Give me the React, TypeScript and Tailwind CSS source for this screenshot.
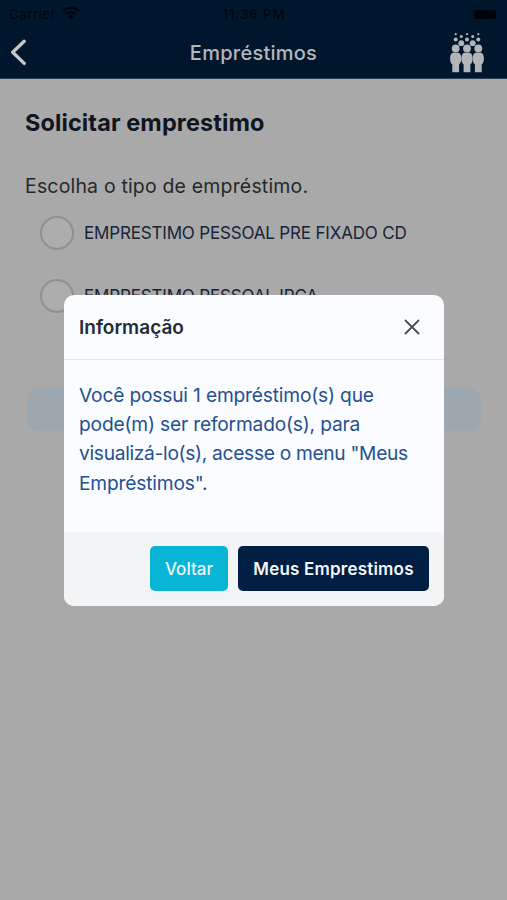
function BackIcon() {
  return (
    <svg className="block h-7 w-5" viewBox="0 0 20 28" fill="none" stroke="#c4c7c9" strokeWidth="3.4" strokeLinecap="round" strokeLinejoin="round">
      <path d="M16.200 2.300 4.700 13.200l11.500 11.200" />
    </svg>
  );
}

function WifiIcon() {
  return (
    <svg className="block h-[14px] w-[18px]" viewBox="0 0 18 14" fill="none" stroke="#00060d" strokeWidth="2.3">
      <path d="M1 4.1a11.8 11.8 0 0 1 16 0" />
      <path d="M3.9 7.2a7.6 7.6 0 0 1 10.2 0" />
      <path d="M9 12.6 5.9 9.5a4.6 4.6 0 0 1 6.2 0z" fill="#00060d" stroke="none" />
    </svg>
  );
}

function PeopleLogo() {
  return (
    <svg className="block h-10 w-9" viewBox="0 0 36 40" fill="#b4b5b7">
      {[6.7, 18, 29.3].map((x) => (
        <g key={x}>
          <circle cx={x} cy="15.500" r="3.900" />
          <path d={`M${x - 3} 19.800h6c2 1 2.600 3.200 2.600 6 0 2.900-.8 4.800-2.200 5.700V39.300h-6.800V31.500c-1.400-.9-2.200-2.800-2.200-5.700 0-2.800.6-5 2.600-6z`} />
          <circle cx={x} cy="6.600" r="2" />
          <circle cx={x} cy="1.200" r="1.100" />
        </g>
      ))}
      <circle cx="12.300" cy="10.200" r="2.900" />
      <circle cx="23.700" cy="10.200" r="2.900" />
      <circle cx="12.300" cy="3.600" r="1.500" />
      <circle cx="23.700" cy="3.600" r="1.500" />
    </svg>
  );
}

function Option({ label }: { label: string }) {
  return (
    <label className="flex h-[34px] items-center gap-[10px]">
      <span className="h-[34px] w-[34px] rounded-full border-2 border-[#909090] bg-[#adadad]" />
      <span className="whitespace-nowrap pt-[2px] text-[17px] tracking-[-0.17px] text-[#172438]">{label}</span>
    </label>
  );
}

export default function App() {
  return (
    <div className="relative h-[900px] w-[507px] overflow-hidden bg-[#a9a9a9] font-['Inter','Liberation_Sans',sans-serif]">
      <header className="h-[79px] border-b border-[#294354] bg-[#00162d]">
        <div className="grid h-7 grid-cols-3 items-center pl-[9px] pr-[11px] text-[13.5px] text-[#00060d]">
          <div className="flex items-center gap-[6px]">
            <span className="tracking-[0.4px]">Carrier</span>
            <WifiIcon />
          </div>
          <span className="pl-[3px] text-center font-medium tracking-[0.8px]">11:36 PM</span>
          <span className="h-[9px] w-[22px] justify-self-end rounded-[3px] bg-[#00040a]" />
        </div>
        <div className="grid h-[50px] grid-cols-[114px_1fr_100px] items-center pl-[8px] pr-[22px]">
          <BackIcon />
          <h1 className="text-center text-[20px] font-medium tracking-[0.25px] text-[#b4b7ba]">Empréstimos</h1>
          <div className="justify-self-end"><PeopleLogo /></div>
        </div>
      </header>

      <main className="px-[25px] pt-[28px]">
        <h2 className="h-8 whitespace-nowrap text-[23.5px] font-bold leading-8 tracking-[0.1px] text-[#10151f]">Solicitar emprestimo</h2>
        <p className="mt-[32px] h-[30px] whitespace-nowrap text-[19.5px] leading-[30px] tracking-[0.17px] text-[#25282d]">Escolha o tipo de empréstimo.</p>
        <div className="mt-[15px] flex flex-col gap-[29px] pl-[15px]">
          <Option label="EMPRESTIMO PESSOAL PRE FIXADO CD" />
          <Option label="EMPRESTIMO PESSOAL IPCA" />
        </div>
        <div className="ml-[2px] mr-px mt-[75px] h-[43px] rounded-[12px] bg-[#9ca7b0]" />
      </main>

      <section role="dialog" className="absolute left-[64px] top-[295px] flex h-[311px] w-[380px] flex-col overflow-hidden rounded-[10px] bg-[#fafcff]">
        <div className="flex h-[65px] items-center justify-between border-b border-[#e2e5e9] pl-[15px] pr-[24px]">
          <h3 className="pt-[2px] text-[19px] font-semibold text-[#222b38]">Informação</h3>
          <svg className="block h-4 w-4" viewBox="0 0 16 16" fill="none" stroke="#494e55" strokeWidth="1.8" strokeLinecap="round">
            <path d="m1.500 1.500 13 13m0-13-13 13" />
          </svg>
        </div>
        <p className="flex-1 whitespace-nowrap pl-[15px] pt-[21px] text-[19.2px] leading-[29.2px] tracking-[-0.18px] text-[#26508f]">
          Você possui 1 empréstimo(s) que<br />
          pode(m) ser reformado(s), para<br />
          <span className="tracking-[-0.31px]">visualizá-lo(s), acesse o menu "Meus</span><br />
          Empréstimos".
        </p>
        <div className="flex h-[74px] items-center justify-end gap-[10px] bg-[#f3f4f6] pb-[2px] pr-[15px]">
          <button className="h-[45px] w-[78px] whitespace-nowrap rounded-[5px] bg-[#08b5d5] pt-[3px] text-[17px] font-medium text-[#eafaff]">Voltar</button>
          <button className="h-[45px] w-[191px] whitespace-nowrap rounded-[5px] bg-[#001f43] pt-[3px] text-[17px] font-semibold tracking-[0.2px] text-[#f3f6fb]">Meus Emprestimos</button>
        </div>
      </section>
    </div>
  );
}
